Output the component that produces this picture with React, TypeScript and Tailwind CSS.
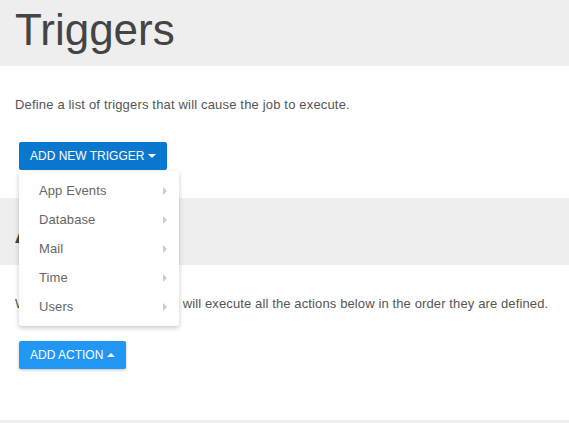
import { useState } from 'react';

// Submenu entries of the trigger dropdown
const triggerTypes = ["App Events", "Database", "Mail", "Time", "Users"];

function Caret({ up }: { up?: boolean }) {
    return (
        <span
            className={`ml-[4px] inline-block h-0 w-0 border-x-[4px] border-x-transparent ${up ? "border-b-[4px] border-b-white" : "border-t-[4px] border-t-white"}`}
        />
    );
}

function App() {
    const [open] = useState(true); // dropdown is shown open in this state

    return (
        <div className="min-h-[423px] bg-white font-['Liberation_Sans',Arial,sans-serif] text-[#555]">
            {/* Triggers section */}
            <div className="h-[66px] bg-[#eeeeee] px-[15px]">
                <h1 className="pt-[4px] text-[44px] leading-[52px] text-[#444]">Triggers</h1>
            </div>
            <div className="px-[15px] pt-[30px] pb-[28px]">
                <p className="text-[13px] leading-[18px] tracking-[0.17px]">Define a list of triggers that will cause the job to execute.</p>
                <div className="relative mt-[28px] ml-[4px] inline-block">
                    <button className="flex h-[28px] items-center rounded-[2px] bg-[#0b78d0] px-[11px] text-[12px] text-white">
                        ADD NEW TRIGGER
                        <Caret />
                    </button>
                    {open && (
                        <ul className="absolute top-[29px] left-0 z-10 w-[160px] rounded-[3px] bg-white py-[5px] shadow-[0_2px_5px_rgba(0,0,0,0.22)]">
                            {triggerTypes.map((t) => (
                                <li key={t} className="flex h-[29px] items-center justify-between pr-[12px] pl-[20px] text-[13px] tracking-[0.1px] text-[#666]">
                                    {t}
                                    <span className="inline-block h-0 w-0 border-y-[4px] border-l-[4px] border-y-transparent border-l-[#cccccc]" />
                                </li>
                            ))}
                        </ul>
                    )}
                </div>
            </div>

            {/* Actions section */}
            <div className="h-[67px] bg-[#eeeeee] px-[15px]">
                <h1 className="pt-[4px] text-[44px] leading-[52px] text-[#444]">Actions</h1>
            </div>
            <div className="px-[15px] pt-[30px] pb-[51px]">
                <p className="text-[13px] leading-[18px] tracking-[0.12px]">When this job is triggered, it will execute all the actions below in the order they are defined.</p>
                <button className="mt-[28px] ml-[4px] flex h-[28px] items-center rounded-[2px] bg-[#2196f3] px-[11px] text-[12px] text-white shadow-[0_1px_3px_rgba(0,0,0,0.25)]">
                    ADD ACTION
                    <Caret up />
                </button>
            </div>
            <div className="h-[4px] bg-[#eeeeee]" />
        </div>
    );
}

export default App;
